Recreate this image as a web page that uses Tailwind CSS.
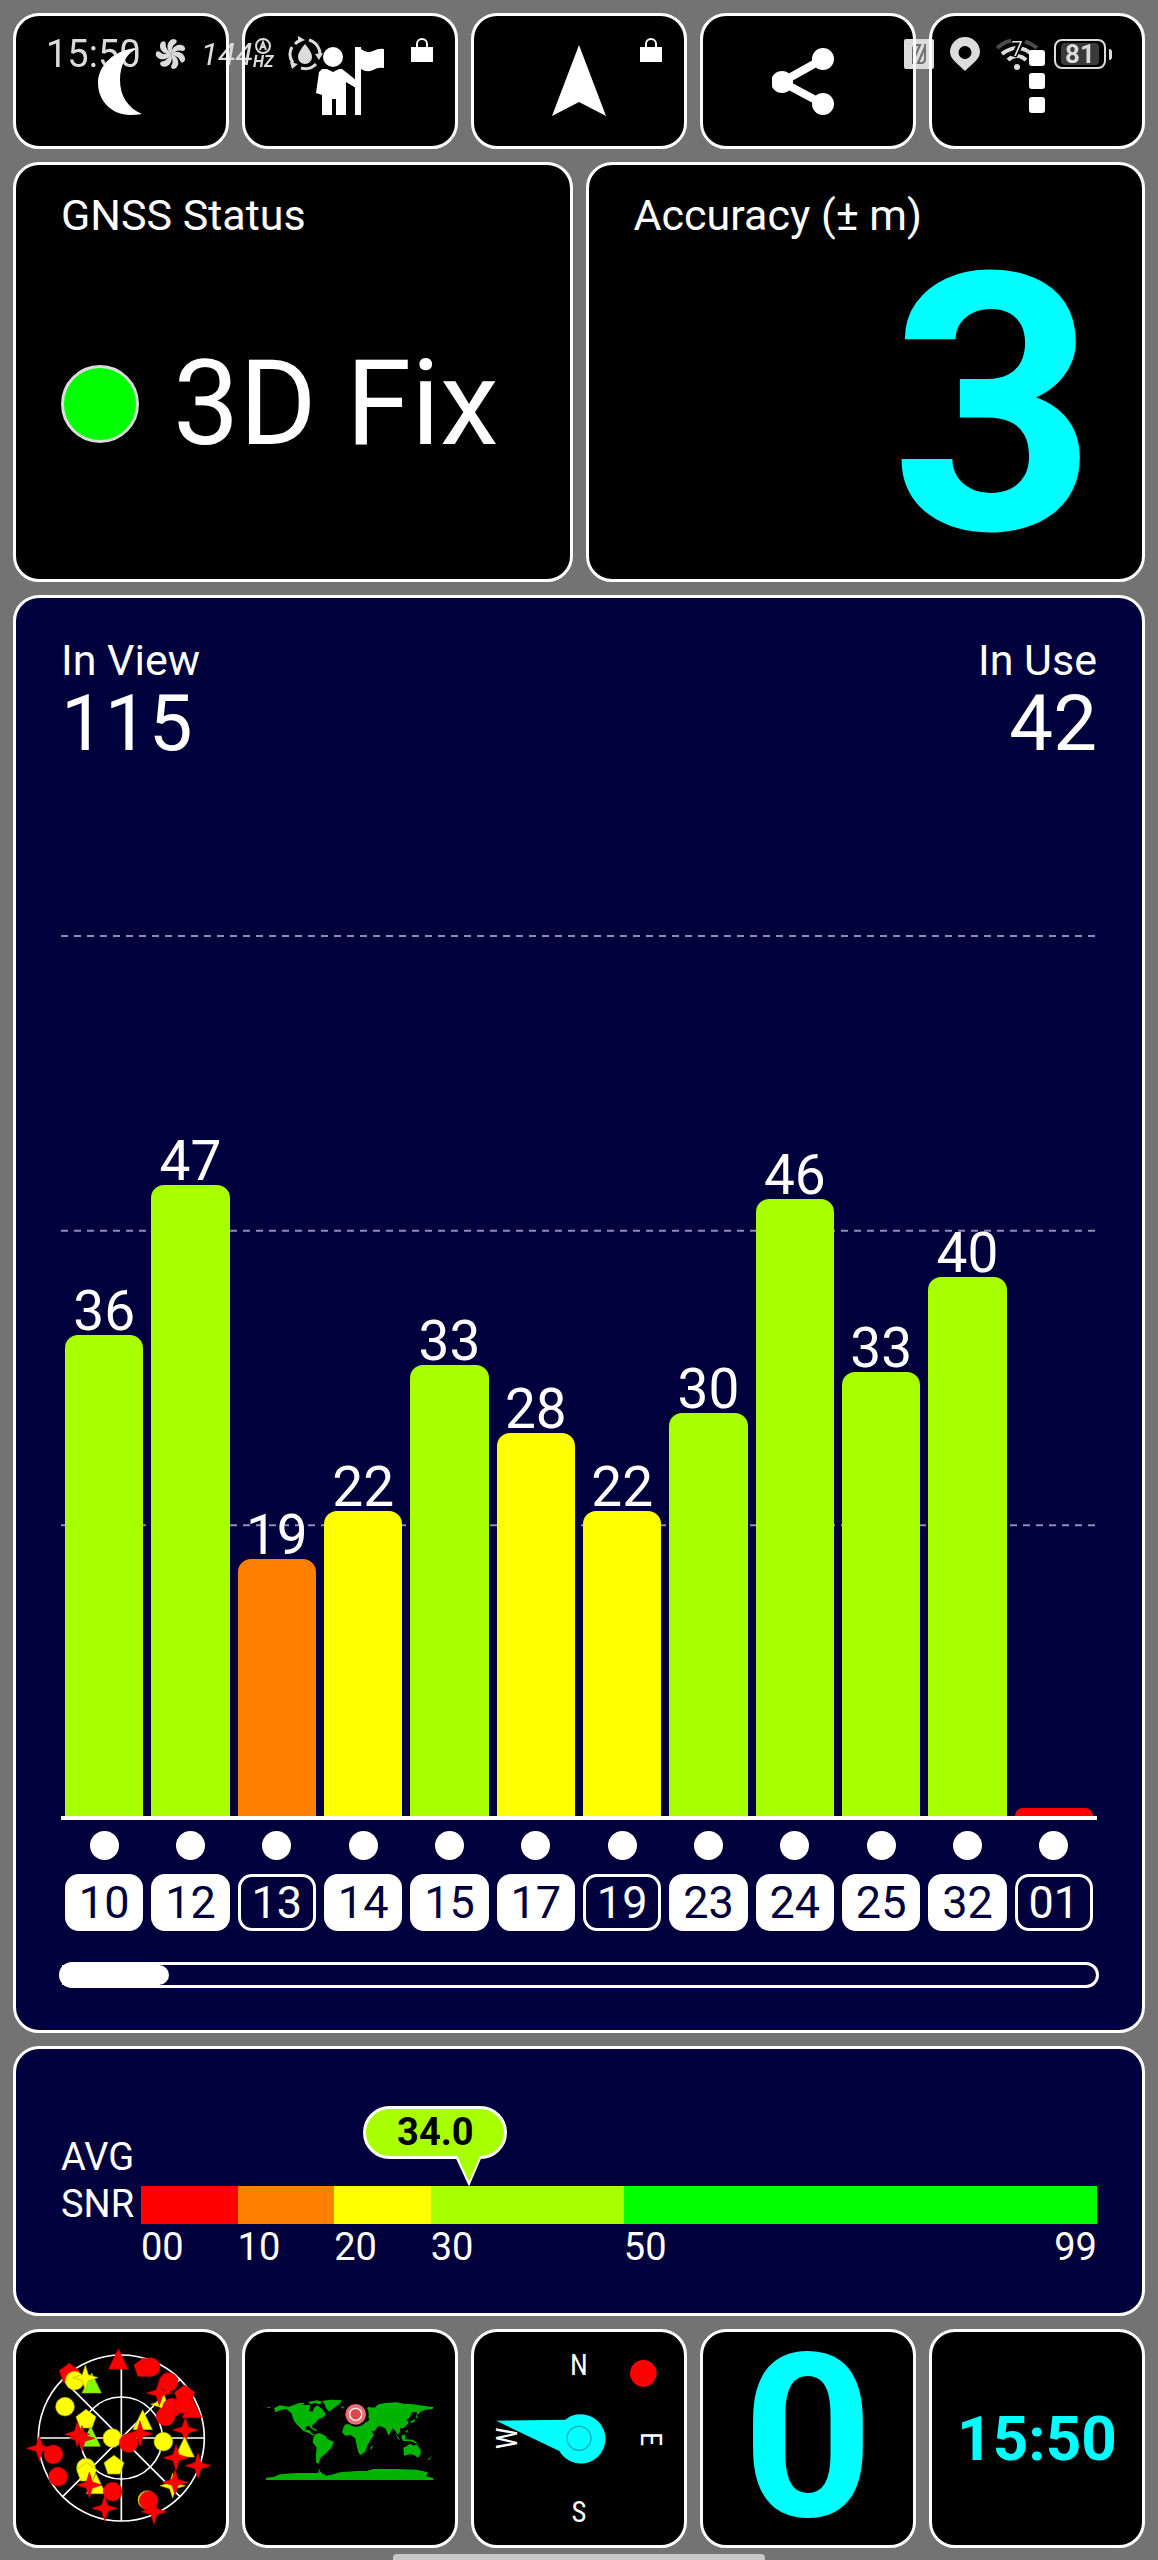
<!DOCTYPE html>
<html lang="en">
<head>
  <meta charset="UTF-8" />
  <meta name="viewport" content="width=device-width, initial-scale=1.0" />
  <title>GNSS Status</title>
  <script src="https://cdn.jsdelivr.net/npm/@tailwindcss/browser@4"></script>
</head>
<body class="bg-[#737373] min-h-screen font-[Roboto,sans-serif] text-white">

  <!-- Phone status bar, lies over the toolbar -->
  <div class="absolute inset-x-0 top-0 z-10 h-[108px] px-[46px] flex items-center justify-between text-[#dcdcdc] mix-blend-lighten pointer-events-none">
    <div class="flex items-center gap-[14px]">
      <span class="text-[38px] leading-none">15:50</span>
      <svg class="w-[32px] h-[32px]" viewBox="0 0 32 32" fill="currentColor">
        <g id="blade"><path d="M16 16C11 12 11 3 18 1C22 1 23 4 20 6C17 8 17 12 16 16Z"/></g>
        <use href="#blade" transform="rotate(51 16 16)"/>
        <use href="#blade" transform="rotate(103 16 16)"/>
        <use href="#blade" transform="rotate(154 16 16)"/>
        <use href="#blade" transform="rotate(206 16 16)"/>
        <use href="#blade" transform="rotate(257 16 16)"/>
        <use href="#blade" transform="rotate(309 16 16)"/>
      </svg>
      <div class="flex items-center">
        <span class="text-[32px] leading-none italic">144</span>
        <div class="flex flex-col items-center">
          <svg class="w-[16px] h-[16px]" viewBox="0 0 16 16" fill="none" stroke="currentColor" stroke-width="2"><circle cx="8" cy="8" r="7"/><path d="M5 12L8 4L11 12M6 9H10"/></svg>
          <span class="text-[16px] leading-4 italic font-bold">HZ</span>
        </div>
      </div>
      <svg class="w-[36px] h-[36px]" viewBox="0 0 36 36" fill="none" stroke="currentColor" stroke-width="3">
        <path d="M22 4A15 15 0 0 1 33 20M29 28A15 15 0 0 1 14 32M6 27A15 15 0 0 1 5 11M8 8A15 15 0 0 1 14 4"/>
        <path d="M11 0L18 4L11 7ZM36 17L32 24L28 18ZM3 26L11 28L5 33Z" fill="currentColor" stroke="none"/>
        <path d="M18 8C22 13 25 17 25 21A7 7 0 0 1 11 21C11 17 14 13 18 8Z" fill="currentColor" stroke="none"/>
      </svg>
    </div>
    <div class="flex items-center gap-4">
      <svg class="w-[30px] h-[30px]" viewBox="0 0 30 30">
        <rect width="30" height="30" rx="2" fill="#dcdcdc"/>
        <path d="M9 25V10Q9 6 13 6H16L9 22M21 5V20Q21 24 17 24H14L21 8" fill="none" stroke="#666" stroke-width="2"/>
      </svg>
      <svg class="w-[30px] h-[34px]" viewBox="0 0 30 34">
        <path d="M15 0A15 15 0 0 1 30 15C30 22 22 27 15 34C8 27 0 22 0 15A15 15 0 0 1 15 0ZM15 9A6 6 0 0 0 15 22A6 6 0 0 0 15 9Z" fill="currentColor"/>
      </svg>
      <svg class="w-[42px] h-[34px]" viewBox="0 0 42 34" fill="none">
        <path d="M1 11Q20 -5 41 11" stroke="#4a4a4a" stroke-width="4"/>
        <path d="M6 17Q21 5 36 17M12 23Q21 15 30 23" stroke="currentColor" stroke-width="4"/>
        <path d="M15 2H27L18 19V16" stroke="#000" stroke-width="6"/>
        <text x="21" y="19" text-anchor="middle" font-size="20" fill="currentColor">7</text>
        <circle cx="21" cy="30" r="3" fill="currentColor"/>
      </svg>
      <div class="flex items-center gap-[3px]">
        <div class="w-[52px] h-[30px] rounded-lg border-2 border-current flex items-center justify-center">
          <span class="bg-[#3a3a3a] w-[38px] rounded-sm text-center text-[26px] leading-[22px] font-bold">81</span>
        </div>
        <div class="w-[3px] h-[11px] bg-current rounded-r"></div>
      </div>
    </div>
  </div>

  <main class="min-h-screen p-[13px] flex flex-col gap-[13px]">
    <!-- Toolbar -->
    <nav class="grid grid-cols-5 gap-[13px]">
      <button aria-label="Night mode" class="h-[136px] bg-black border-3 border-white rounded-[26px] flex items-center justify-center">
        <svg class="w-[72px] h-[72px]" viewBox="0 0 72 72" fill="#fff"><path d="M53 3C30 4 13 20 13 38C13 56 27 70 45 70Q52 70 57 69C43 63 35 51 35 35C35 19 42 8 53 3Z"/></svg>
      </button>
      <button aria-label="Guide" class="relative h-[136px] bg-black border-3 border-white rounded-[26px] flex items-center justify-center">
        <svg class="w-[72px] h-[72px]" viewBox="0 0 72 72" fill="#fff">
          <circle cx="19" cy="12" r="10"/>
          <path d="M8 24H13L19 27L25 24H28L42 35V43L32 37V70H22V54H18V70H8V50L2 48L5 27Z"/>
          <rect x="41" y="2" width="6" height="68"/>
          <path d="M47 4Q53 9 59 6Q65 3 70 4V23Q64 22 59 25Q53 28 47 24Z"/>
        </svg>
        <svg class="absolute right-[22px] top-[21px] w-[22px] h-[26px]" viewBox="0 0 22 26"><rect y="10" width="22" height="15" fill="#fff"/><path d="M6 11V7A5 5 0 0 1 16 7V11" fill="none" stroke="#fff" stroke-width="2"/></svg>
      </button>
      <button aria-label="Navigate" class="relative h-[136px] bg-black border-3 border-white rounded-[26px] flex items-center justify-center">
        <svg class="w-[72px] h-[72px]" viewBox="0 0 72 72" fill="#fff"><path d="M36 0L63 71L36 57L9 71Z"/></svg>
        <svg class="absolute right-[22px] top-[21px] w-[22px] h-[26px]" viewBox="0 0 22 26"><rect y="10" width="22" height="15" fill="#fff"/><path d="M6 11V7A5 5 0 0 1 16 7V11" fill="none" stroke="#fff" stroke-width="2"/></svg>
      </button>
      <button aria-label="Share" class="h-[136px] bg-black border-3 border-white rounded-[26px] flex items-center justify-center">
        <svg class="w-[72px] h-[72px]" viewBox="0 0 72 72" fill="#fff">
          <path d="M51 14L10 37L51 59" fill="none" stroke="#fff" stroke-width="8"/>
          <circle cx="51" cy="14" r="11"/><circle cx="10" cy="37" r="11"/><circle cx="51" cy="59" r="11"/>
        </svg>
      </button>
      <button aria-label="More" class="h-[136px] bg-black border-3 border-white rounded-[26px] flex items-center justify-center">
        <svg class="w-[72px] h-[72px]" viewBox="0 0 72 72" fill="#fff"><rect x="28" y="5" width="16" height="16" rx="3"/><rect x="28" y="28" width="16" height="16" rx="3"/><rect x="28" y="52" width="16" height="16" rx="3"/></svg>
      </button>
    </nav>

    <!-- Fix and accuracy -->
    <section class="grid grid-cols-2 gap-[13px]">
      <div class="bg-black border-3 border-white rounded-[26px] px-[45px] pt-6 pb-3">
        <h2 class="text-[43px] leading-[52px]">GNSS Status</h2>
        <div class="h-[326px] flex items-center gap-[34px]">
          <span class="w-[78px] h-[78px] rounded-full bg-[#00ff00] border-3 border-[#dcdcdc]"></span>
          <span class="text-[118px] leading-none">3D Fix</span>
        </div>
      </div>
      <div class="bg-black border-3 border-white rounded-[26px] px-[45px] pt-6 pb-3">
        <h2 class="text-[43px] leading-[52px]">Accuracy (± m)</h2>
        <div class="h-[326px] text-[360px] leading-[330px] text-right font-bold text-[#00ffff]">3</div>
      </div>
    </section>

    <!-- Signal chart -->
    <section class="bg-[#00003c] border-3 border-white rounded-[26px] px-[45px] pt-9 pb-[42px]">
      <div class="flex justify-between">
        <div>
          <div class="text-[43px] leading-[52px]">In View</div>
          <div class="text-[78px] leading-[76px]">115</div>
        </div>
        <div class="text-right">
          <div class="text-[43px] leading-[52px]">In Use</div>
          <div class="text-[78px] leading-[76px]">42</div>
        </div>
      </div>

      <div class="relative mt-[174px]">
        <svg class="absolute inset-0 w-full h-full overflow-visible" stroke="#8c8cb4" stroke-width="2" stroke-dasharray="7 6">
          <line x1="0" x2="100%" y1="0" y2="0"/>
          <line x1="0" x2="100%" y1="33.33%" y2="33.33%"/>
          <line x1="0" x2="100%" y1="66.67%" y2="66.67%"/>
        </svg>
        <div id="bars" class="relative h-[884px] border-b-4 border-white grid grid-cols-12"></div>
      </div>
      <div id="sats" class="pt-[11px] grid grid-cols-12"></div>

      <div role="progressbar" aria-label="Satellites shown" class="-mx-0.5 mt-[31px] h-[26px] rounded-full border-3 border-white">
        <div class="w-[107px] h-full bg-white rounded-r-full"></div>
      </div>
    </section>

    <!-- Average SNR -->
    <section class="bg-[#00003c] border-3 border-white rounded-[26px] px-[45px] pt-[57px] pb-[42px] flex text-[38px] leading-[47px]">
      <div class="w-[80px] pt-7">AVG<br>SNR</div>
      <div class="flex-1">
        <div class="relative h-20">
          <div id="average" class="absolute top-0">
            <div class="absolute -left-[106px] top-0 w-[144px] h-[53px] rounded-full border-3 border-white bg-[#a8ff00] text-black text-center font-bold">34.0</div>
            <svg class="absolute -left-[14px] top-[49px] w-[28px] h-[32px]" viewBox="0 0 28 32"><path d="M1 1L14 29L26 1" fill="#a8ff00" stroke="#fff" stroke-width="2"/></svg>
          </div>
        </div>
        <div class="flex">
          <div class="grow-10 basis-0"><div class="h-[38px] bg-[#ff0000]"></div>00</div>
          <div class="grow-10 basis-0"><div class="h-[38px] bg-[#ff8000]"></div>10</div>
          <div class="grow-10 basis-0"><div class="h-[38px] bg-[#ffff00]"></div>20</div>
          <div class="grow-20 basis-0"><div class="h-[38px] bg-[#a8ff00]"></div>30</div>
          <div class="grow-49 basis-0"><div class="h-[38px] bg-[#00ff00]"></div><div class="flex justify-between"><span>50</span><span>99</span></div></div>
        </div>
      </div>
    </section>

    <!-- Screens -->
    <nav class="grid grid-cols-5 gap-[13px]">
      <button aria-label="Sky view" class="h-[219px] bg-black border-3 border-white rounded-[26px] overflow-hidden">
        <svg class="w-full h-full" viewBox="48 63 630 639">
          <g fill="none" stroke="#fff" stroke-width="5">
            <circle cx="364" cy="381" r="249"/><circle cx="364" cy="381" r="123"/>
            <path d="M364 132V630M115 381H613M188 205L540 557M540 205L188 557"/>
          </g>
          <g id="sky" stroke-width="2"></g>
        </svg>
      </button>
      <button aria-label="World map" class="h-[219px] bg-black border-3 border-white rounded-[26px] overflow-hidden">
        <svg class="w-full h-full" viewBox="45 63 630 639">
          <g fill="#00b400">
            <path d="M132 291L150 283L176 287L200 279L222 283L240 281L240 292L236 300L248 302L252 290L262 283L276 293L288 310L278 320L266 324L258 334L248 342L243 352L236 344L226 348L226 356L240 358L246 368L256 372L250 374L236 366L220 360L206 346L192 330L184 306L168 294L152 297L136 304Z"/>
            <path d="M234 273L262 268L276 272L270 280L254 276L242 280ZM276 270L300 266L336 268L328 280L312 290L298 302L288 292L284 280ZM200 277L220 275L224 280L206 282ZM244 348L262 358L256 360L242 352ZM108 287L122 289L118 292Z"/>
            <path d="M256 370L268 366L286 374L292 384L312 393L304 410L292 422L282 432L272 440L266 458L258 454L258 430L260 410L248 394L250 380Z"/>
            <path d="M340 350L346 340L356 340L360 334L372 340L384 338L400 330L410 334L418 326L412 312L404 300L414 288L434 290L446 280L466 276L500 274L520 278L550 280L580 284L610 288L608 294L586 296L572 302L562 312L560 302L546 304L540 318L530 326L536 336L528 344L520 352L510 352L510 362L504 372L496 360L488 352L476 374L466 352L452 346L444 346L434 360L424 360L432 372L422 386L412 404L406 422L392 432L386 426L380 404L376 382L362 372L346 374L336 364Z"/>
            <path d="M344 326L350 318L352 332ZM332 288L342 286L340 293ZM430 402L424 416L420 410ZM494 364L510 386L504 384ZM514 374L526 370L526 384L516 386ZM520 384L548 386L566 398L556 396L540 390L518 390ZM540 332L556 324L554 332L542 336ZM560 308L564 320L558 322ZM606 434L598 446L592 446Z"/>
            <path d="M520 410L532 404L540 398L552 404L560 400L572 416L572 430L564 440L552 432L540 430L522 434Z"/>
            <path d="M108 500L130 498L150 490L200 486L260 486L272 482L278 488L290 494L310 490L330 484L380 480L410 480L430 474L500 474L560 476L594 484L588 496L610 501V507H108Z"/>
            <path d="M536 356L530 366L526 360ZM266 474L272 480L266 484Z"/>
          </g>
          <circle cx="379" cy="310" r="37" fill="#000"/>
          <circle cx="377" cy="310" r="31" fill="#f06c74"/>
          <circle cx="377" cy="310" r="18" fill="#d84850" stroke="#fff" stroke-width="4"/>
        </svg>
      </button>
      <button aria-label="Compass" class="h-[219px] bg-black border-3 border-white rounded-[26px] overflow-hidden">
        <svg class="w-full h-full" viewBox="42 63 630 639" fill="#fff" font-family="Roboto Condensed, Liberation Sans Narrow, Roboto, sans-serif" font-size="86" text-anchor="middle">
          <text x="357" y="193">N</text>
          <text x="357" y="634">S</text>
          <text transform="translate(544 384) rotate(90)">E</text>
          <text transform="translate(171 382) rotate(-90)">W</text>
          <path d="M108 329L316 326A74 74 0 1 1 298 420Z" fill="#00ffff"/>
          <circle cx="357" cy="382" r="36" fill="none" stroke="#00a8b4" stroke-width="4"/>
          <circle cx="550" cy="187" r="40" fill="#ff0000"/>
        </svg>
      </button>
      <button aria-label="Speed" class="h-[219px] bg-black border-3 border-white rounded-[26px] text-[228px] leading-[213px] font-bold text-[#00ffff]">0</button>
      <button aria-label="Time" class="h-[219px] bg-black border-3 border-white rounded-[26px] text-[62px] leading-[213px] font-bold text-[#00ffff]">15:50</button>
    </nav>
  </main>

  <!-- Gesture handle -->
  <div class="fixed bottom-0 left-1/2 -translate-x-1/2 w-[372px] h-[6px] rounded-t bg-[#c8c8c8]"></div>

  <script>
    const MAX_SNR = 66;

    // id, signal, used in fix
    const satellites = [
      ["10", 36.1, true], ["12", 47.3, true], ["13", 19.3, false], ["14", 22.9, true],
      ["15", 33.8, true], ["17", 28.7, true], ["19", 22.9, false], ["23", 30.2, true],
      ["24", 46.3, true], ["25", 33.3, true], ["32", 40.4, true], ["01", 0.6, false]
    ];

    function barColor(snr) {
      if (snr >= 30) return "bg-[#a8ff00]";
      if (snr >= 20) return "bg-[#ffff00]";
      if (snr >= 10) return "bg-[#ff8000]";
      return "bg-[#ff0000]";
    }

    document.getElementById("bars").innerHTML = satellites.map(([id, snr]) => `
      <div class="h-full px-1 flex flex-col justify-end">
        <div class="text-[55px] leading-[48px] text-center">${snr >= 1 ? Math.floor(snr) : ""}</div>
        <div class="shrink-0 rounded-t-[13px] ${barColor(snr)}" style="height:${snr / MAX_SNR * 100}%"></div>
      </div>`).join("");

    document.getElementById("sats").innerHTML = satellites.map(([id, snr, used]) => `
      <div class="px-1 flex flex-col items-center gap-[14px]">
        <span class="w-[29px] h-[29px] rounded-full bg-white"></span>
        <span class="w-full h-[57px] rounded-[14px] border-3 border-white text-[45px] leading-[51px] text-center ${used ? "bg-white text-[#00003c]" : "text-white"}">${id}</span>
      </div>`).join("");

    document.getElementById("average").style.left = `${34 / 99 * 100}%`;

    // Sky view markers: shape, x, y, colour
    const RED = "#ff0000", YELLOW = "#ffff00", GREEN = "#80ff00";
    const shapes = {
      circle: "M-28 0A28 28 0 1 1 28 0A28 28 0 1 1 -28 0Z",
      penta: "M0 -30L30 -8L18 26H-18L-30 -8Z",
      tri: "M0 -34L29 26H-29Z",
      star: "M0 -38L9 -9L38 0L9 9L0 38L-9 9L-38 0L-9 -9Z"
    };
    const markers = [
      ["penta", 208, 187, RED], ["circle", 224, 209, YELLOW], ["tri", 275, 220, GREEN], ["star", 256, 200, YELLOW],
      ["tri", 355, 148, RED], ["penta", 432, 170, RED], ["circle", 452, 168, RED],
      ["circle", 195, 287, YELLOW], ["penta", 258, 325, YELLOW], ["tri", 272, 380, GREEN],
      ["star", 232, 370, RED], ["star", 246, 382, RED], ["circle", 337, 381, YELLOW],
      ["tri", 428, 330, YELLOW], ["star", 420, 368, RED], ["circle", 386, 396, RED],
      ["circle", 490, 392, YELLOW], ["star", 490, 280, YELLOW], ["star", 478, 246, RED],
      ["circle", 506, 213, RED], ["penta", 554, 252, RED], ["circle", 516, 290, RED],
      ["tri", 576, 294, RED], ["penta", 550, 280, RED], ["circle", 497, 316, RED],
      ["star", 556, 357, RED], ["tri", 554, 412, YELLOW], ["star", 528, 440, RED],
      ["star", 594, 464, RED], ["star", 518, 524, YELLOW], ["star", 525, 514, RED],
      ["star", 118, 412, RED], ["circle", 160, 430, RED], ["circle", 174, 497, RED],
      ["circle", 258, 470, YELLOW], ["penta", 260, 484, YELLOW], ["penta", 342, 463, YELLOW],
      ["tri", 288, 522, YELLOW], ["star", 268, 522, RED], ["circle", 338, 542, RED],
      ["star", 314, 592, RED], ["circle", 442, 567, YELLOW], ["circle", 446, 569, RED], ["star", 462, 602, RED]
    ];
    document.getElementById("sky").innerHTML = markers.map(([shape, x, y, color]) =>
      `<path d="${shapes[shape]}" transform="translate(${x} ${y})" fill="${color}" stroke="${color === RED ? "#d00000" : "#b0b000"}"/>`
    ).join("");
  </script>
</body>
</html>
